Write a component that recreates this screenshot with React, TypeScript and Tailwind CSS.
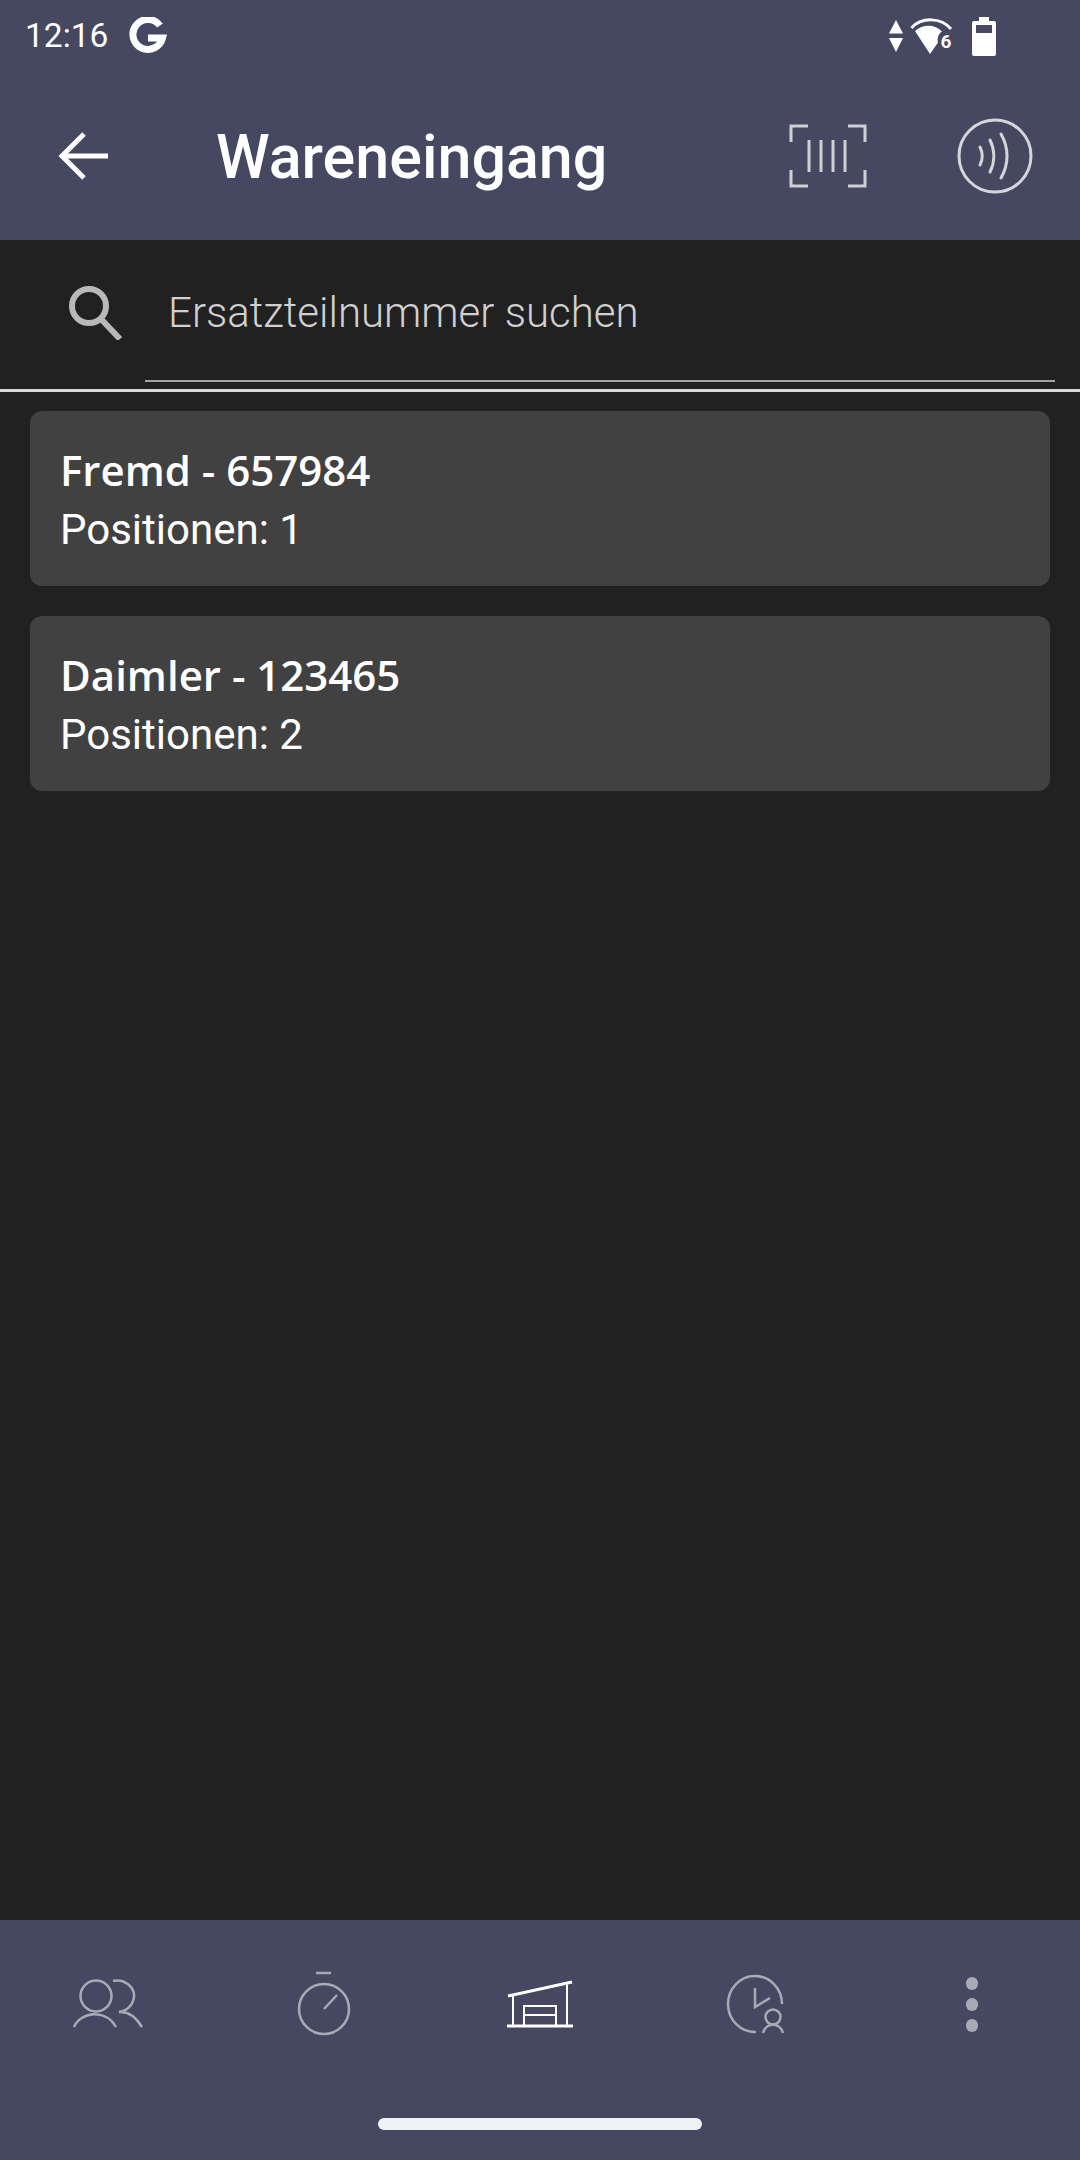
import React from 'react';

const roboto = { fontFamily: 'Roboto, sans-serif' };

function GoogleG() {
  return (
    <svg width="40" height="38" viewBox="0 0 40 38" fill="none">
      <path
        d="M32 8.5A15 15 0 1 0 34.5 21H20"
        stroke="white"
        strokeWidth="7"
      />
    </svg>
  );
}

function StatusIcons() {
  return (
    <div className="flex items-center">
      <svg width="14" height="32" viewBox="0 0 14 32" fill="white">
        <path d="M7 0L14 13.5H0z" />
        <path d="M7 32L0 18h14z" />
      </svg>
      <svg className="ml-[7px]" width="43" height="36" viewBox="0 0 43 36">
        <path d="M1.5 10C11 -1 31 -1 41 11" fill="none" stroke="white" strokeWidth="3" />
        <path d="M5 13C13 6 25 6 32 13.5C28 16 27 21 28 24.5L20 36z" fill="white" />
        <text x="36" y="30" fill="white" fontSize="19" fontWeight="700" textAnchor="middle" fontFamily="Roboto, sans-serif">
          6
        </text>
      </svg>
      <svg className="ml-[19px]" width="24" height="39" viewBox="0 0 24 39" fill="white">
        <path fillRule="evenodd" d="M7 0h10v4h5a2 2 0 0 1 2 2v31a2 2 0 0 1-2 2H2a2 2 0 0 1-2-2V6a2 2 0 0 1 2-2h5zM4 8v8h16V8z" />
      </svg>
    </div>
  );
}

function BackArrow() {
  return (
    <svg width="50" height="48" viewBox="0 0 50 48" fill="none" stroke="white" strokeWidth="5">
      <path d="M50 24H4" />
      <path d="M26 2L4 24l22 22" />
    </svg>
  );
}

function BarcodeIcon() {
  return (
    <svg width="78" height="64" viewBox="0 0 78 64" fill="none" stroke="#cfd0d4" strokeWidth="3">
      <path d="M2 18V2h17M59 2h17v16M2 46v16h17M59 62h17V46" />
      <path d="M20 16v32M32 16v32M44 16v32M56 16v32" />
    </svg>
  );
}

function NfcIcon() {
  return (
    <svg width="76" height="76" viewBox="0 0 76 76" fill="none" stroke="#d5d6d9" strokeWidth="3" strokeLinecap="round">
      <circle cx="38" cy="38" r="36" />
      <path d="M23 29c3 6 3 12 0 18" />
      <path d="M33 22c5 10 5 22 0 32" />
      <path d="M44 16c8 14 8 30 0 44" />
    </svg>
  );
}

function SearchIcon() {
  return (
    <svg width="54" height="54" viewBox="0 0 54 54" fill="none" stroke="#b8b8b8">
      <circle cx="20" cy="20" r="17" strokeWidth="6" />
      <path d="M32 33l19 20" strokeWidth="6" />
    </svg>
  );
}

function PeopleIcon() {
  return (
    <svg width="72" height="50" viewBox="0 0 72 50" fill="none" stroke="#a8aab6" strokeWidth="2.5">
      <circle cx="24" cy="17" r="15.5" />
      <path d="M2 48C9 32 34 30 44 48" />
      <path d="M41 2C53 -1 63 9 62 18C61 26 55 32 47 33" />
      <path d="M47 33C56 32 64 38 70 48" />
    </svg>
  );
}

function TimerIcon() {
  return (
    <svg width="54" height="66" viewBox="0 0 54 66" fill="none" stroke="#a8aab6" strokeWidth="2.5">
      <path d="M19 2h15" />
      <circle cx="27" cy="38" r="25" />
      <path d="M27 38l13-14" />
    </svg>
  );
}

function WarehouseIcon() {
  return (
    <svg width="66" height="48" viewBox="0 0 66 48" fill="none" stroke="white" strokeWidth="2">
      <path d="M1 16L65 2" strokeWidth="3" />
      <path d="M6 15v30M60 3v42" />
      <path d="M0 46h66" strokeWidth="3" />
      <path d="M17 45V26h32v19M17 35h32" />
    </svg>
  );
}

function ClockPersonIcon() {
  return (
    <svg width="60" height="60" viewBox="0 0 60 60" fill="none" stroke="#a8aab6" strokeWidth="2.5">
      <path d="M56 30A27 28 0 1 0 30 58" />
      <path d="M29 14v19l15-9" />
      <circle cx="47" cy="43" r="7.5" />
      <path d="M37 59c3-11 17-11 20 0" />
    </svg>
  );
}

function MoreIcon() {
  return (
    <div className="flex flex-col gap-[8px]">
      <div className="w-[12px] h-[13px] rounded-full bg-[#a8aab6]" />
      <div className="w-[12px] h-[13px] rounded-full bg-[#a8aab6]" />
      <div className="w-[12px] h-[13px] rounded-full bg-[#a8aab6]" />
    </div>
  );
}

function DeliveryCard({ title, count }: { title: string; count: number }) {
  return (
    <div className="h-[175px] rounded-[12px] bg-[#414141] pl-[30px] pt-[35px] text-white">
      <p className="m-0 text-[42px] leading-[48px] font-semibold font-['Open_Sans',sans-serif]">{title}</p>
      <p className="m-0 mt-[12px] text-[42px] leading-[48px] font-['Roboto',sans-serif]">Positionen: {count}</p>
    </div>
  );
}

export default function App() {
  return (
    <div className="flex flex-col w-[1080px] h-[2160px] bg-[#212121]" style={roboto}>
      <div className="h-[240px] bg-[#454860] text-white">
        <div className="flex items-center h-[72px] pl-[25px] pr-[84px]">
          <span className="text-[33.5px] leading-none">12:16</span>
          <div className="ml-[20px]">
            <GoogleG />
          </div>
          <div className="ml-auto">
            <StatusIcons />
          </div>
        </div>
        <div className="flex items-center h-[168px] pl-[58px] pr-[47px]">
          <BackArrow />
          <h1 className="ml-[108px] pt-[2px] text-[61px] leading-none font-medium">Wareneingang</h1>
          <div className="ml-auto">
            <BarcodeIcon />
          </div>
          <div className="ml-[90px]">
            <NfcIcon />
          </div>
        </div>
      </div>

      <div className="h-[152px] border-b-[3px] border-[#d9d9d9]">
        <div className="flex items-center h-[142px] pl-[69px] pr-[25px]">
          <div className="pt-[4px]">
            <SearchIcon />
          </div>
          <div className="ml-[22px] flex-1 h-[142px] border-b-2 border-[#a6a6a6] flex items-center">
            <span className="ml-[23px] pt-[6px] text-[42px] leading-none font-light text-[#d0d0d0]">
              Ersatzteilnummer suchen
            </span>
          </div>
        </div>
      </div>

      <div className="flex-1 flex flex-col gap-[30px] pt-[19px] px-[30px]">
        <DeliveryCard title="Fremd - 657984" count={1} />
        <DeliveryCard title="Daimler - 123465" count={2} />
      </div>

      <div className="h-[240px] bg-[#454860] flex flex-col">
        <div className="grid grid-cols-5 h-[198px] items-center pb-[30px]">
          <div className="flex justify-center"><PeopleIcon /></div>
          <div className="flex justify-center"><TimerIcon /></div>
          <div className="flex justify-center"><WarehouseIcon /></div>
          <div className="flex justify-center"><ClockPersonIcon /></div>
          <div className="flex justify-center"><MoreIcon /></div>
        </div>
        <div className="self-center w-[324px] h-[12px] rounded-full bg-[#eff2f4]" />
      </div>
    </div>
  );
}
